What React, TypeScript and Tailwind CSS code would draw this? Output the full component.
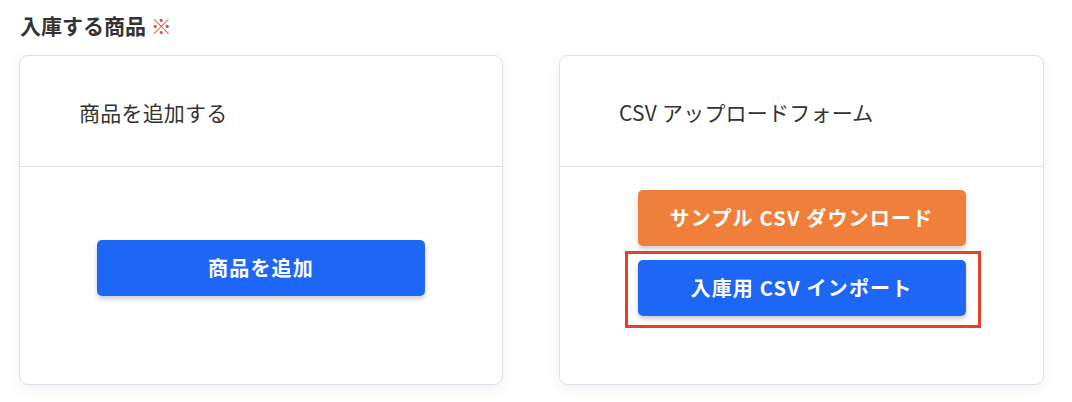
import { ReactNode } from 'react';

const font = { fontFamily: '"Noto Sans CJK JP", "Noto Sans", sans-serif' };

function Card({ title, children }: { title: string; children: ReactNode }) {
  return (
    <div className="h-[330px] rounded-[9px] border-[1.5px] border-[#dfdfe7] bg-white shadow-[0_4px_14px_rgba(40,40,80,0.07)] flex flex-col">
      <div className="h-[111px] shrink-0 flex items-center pl-[59px] pt-[3px] border-b-[1.5px] border-[#dfdfe7]">
        <span className="text-[21px] tracking-[0.01em] text-[#333]">{title}</span>
      </div>
      <div className="flex-1 flex flex-col items-center">{children}</div>
    </div>
  );
}

function Button({ color, children }: { color: 'blue' | 'orange'; children: ReactNode }) {
  return (
    <button
      className={
        'w-[328px] h-[56px] rounded-[5px] text-white font-bold text-[20px] tracking-[0.06em] shadow-[0_3px_5px_rgba(0,0,0,0.2)] ' +
        (color === 'blue' ? 'bg-[#1d66f6]' : 'bg-[#ef7f3a]')
      }
    >
      {children}
    </button>
  );
}

export default function App() {
  return (
    <div className="w-[1072px] h-[402px] bg-white overflow-hidden" style={font}>
      <div className="pt-[9px] pl-[20px] h-[55px]">
        <h2 className="text-[21px] leading-[32px] font-bold text-[#333]">
          入庫する商品 <span className="text-[#d9534f] font-normal">※</span>
        </h2>
      </div>
      <div className="flex pl-[19px] gap-[56px]">
        <div className="w-[484px]">
          <Card title="商品を追加する">
            <div className="pt-[73px]">
              <Button color="blue">商品を追加</Button>
            </div>
          </Card>
        </div>
        <div className="w-[485px]">
          <Card title="CSV アップロードフォーム">
            <div className="pt-[23px] flex flex-col gap-[14px]">
              <Button color="orange">サンプル CSV ダウンロード</Button>
              <div className="relative">
                <Button color="blue">入庫用 CSV インポート</Button>
                <div className="absolute -left-[13px] -top-[9px] -right-[15px] -bottom-[12px] border-[3.5px] border-[#e4412b] pointer-events-none" />
              </div>
            </div>
          </Card>
        </div>
      </div>
    </div>
  );
}
